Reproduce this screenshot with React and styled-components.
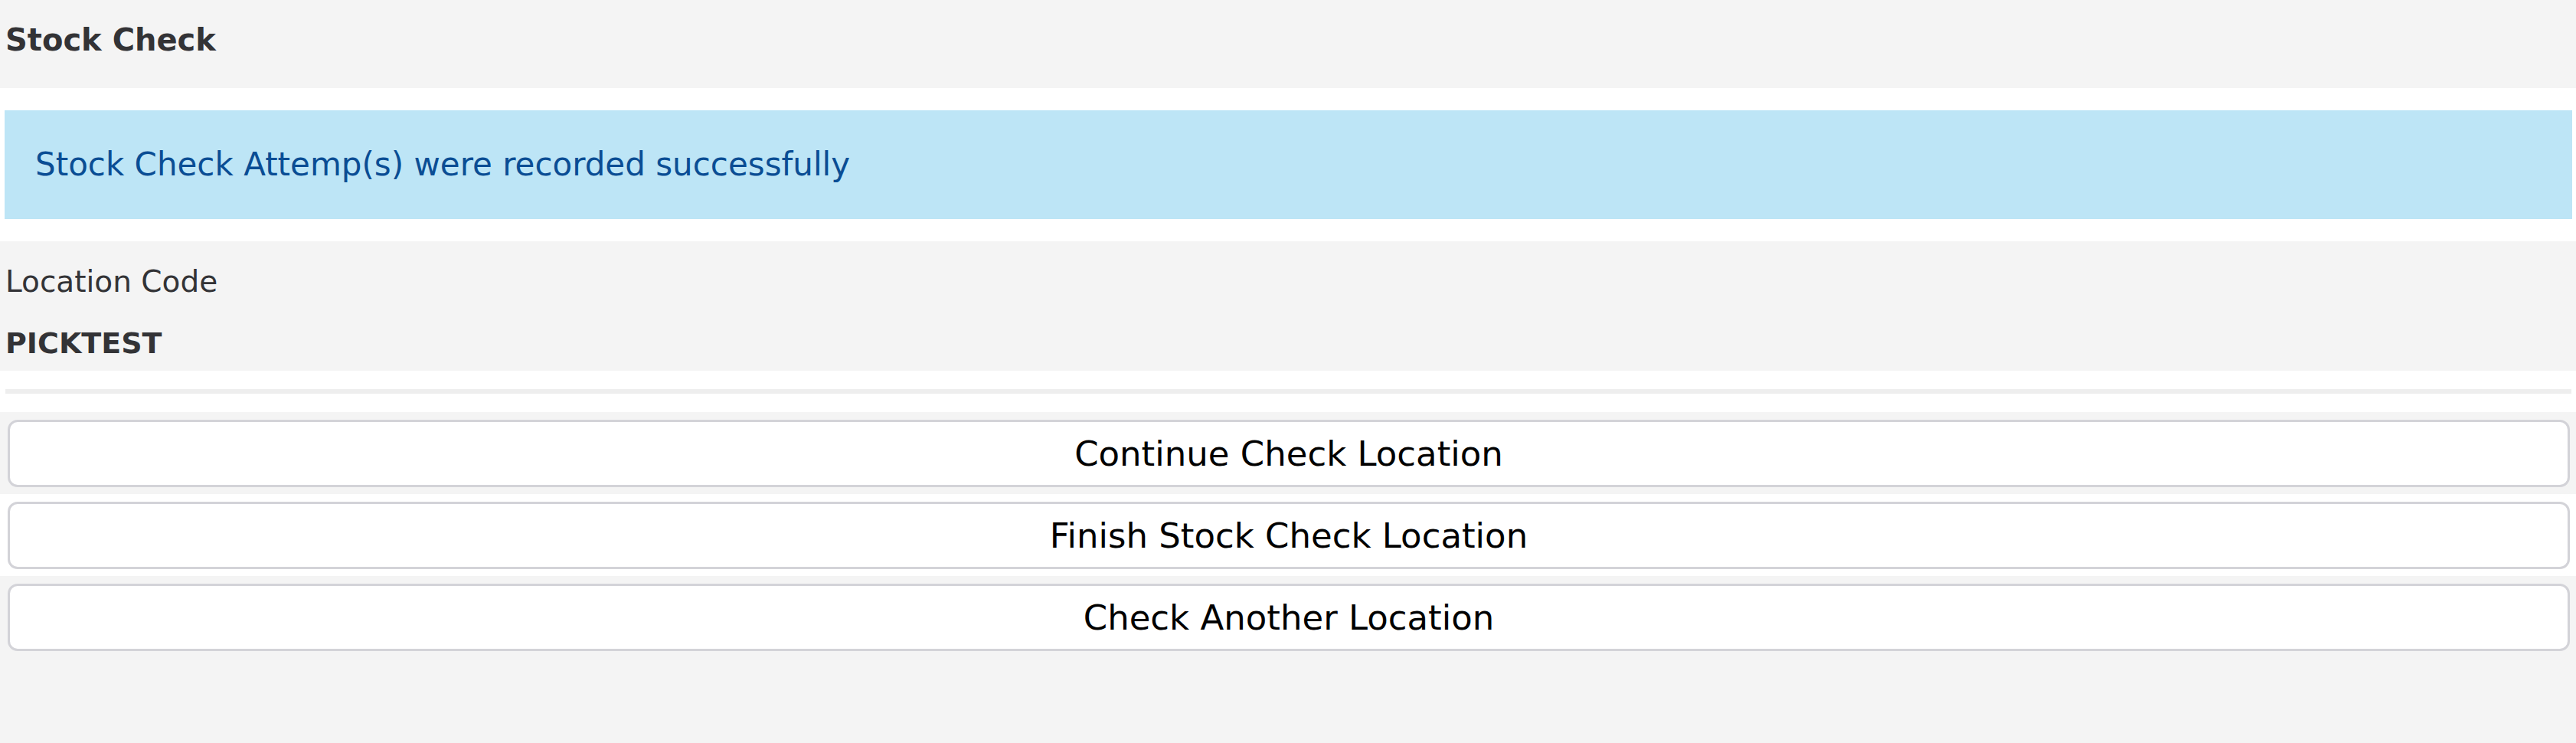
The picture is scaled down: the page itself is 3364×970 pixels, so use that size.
import React from 'react';
import styled, { createGlobalStyle } from 'styled-components';

const GlobalStyle = createGlobalStyle`
  html, body {
    margin: 0;
    padding: 0;
    background-color: #f4f4f4;
    font-family: 'DejaVu Sans', 'Liberation Sans', sans-serif;
  }
`;

const Page = styled.div`
  min-height: 100vh;
  background-color: #f4f4f4;
  color: #333336;
`;

const Row = styled.div`
  background-color: ${({ $striped }) => ($striped ? '#ffffff' : '#f4f4f4')};
  box-sizing: border-box;
`;

const HeaderRow = styled(Row)`
  height: 115px;
  padding: 32px 6px 0 7px;
`;

const Title = styled.h1`
  margin: 0;
  font-size: 40px;
  line-height: 1;
  font-weight: 700;
  color: #333336;
`;

const AlertRow = styled(Row)`
  padding: 29px 5px 29px 6px;
`;

const Alert = styled.div`
  display: flex;
  align-items: center;
  height: 142px;
  box-sizing: border-box;
  padding-left: 40px;
  background-color: #bde5f6;
  color: #0a4d94;
  font-size: 42px;
  line-height: 1;
`;

const LocationRow = styled(Row)`
  display: flex;
  flex-direction: column;
  gap: 42px;
  padding: 33px 6px 17px 7px;
`;

const Label = styled.div`
  font-size: 39px;
  line-height: 1;
  color: #333336;
`;

const Code = styled.div`
  font-size: 38px;
  line-height: 1;
  font-weight: 700;
  color: #333336;
`;

const DividerRow = styled(Row)`
  padding: 24px 6px 24px 7px;
`;

const Divider = styled.div`
  height: 6px;
  background-color: #eeeeee;
`;

const ButtonRow = styled(Row)`
  padding: 10px 8px 9px 10px;
`;

const ActionButton = styled.button`
  display: flex;
  align-items: center;
  justify-content: center;
  width: 100%;
  height: 88px;
  box-sizing: border-box;
  border: 3px solid #d3d3d8;
  border-radius: 13px;
  background-color: #ffffff;
  color: #000000;
  font-family: 'DejaVu Sans', 'Liberation Sans', sans-serif;
  font-size: 45px;
  line-height: 1;
  cursor: pointer;
`;

const actions = [
  'Continue Check Location',
  'Finish Stock Check Location',
  'Check Another Location',
];

export default function App() {
  return (
    <Page>
      <GlobalStyle />
      <HeaderRow>
        <Title>Stock Check</Title>
      </HeaderRow>

      <AlertRow $striped>
        <Alert>Stock Check Attemp(s) were recorded successfully</Alert>
      </AlertRow>

      <LocationRow>
        <Label>Location Code</Label>
        <Code>PICKTEST</Code>
      </LocationRow>

      <DividerRow $striped>
        <Divider />
      </DividerRow>

      {actions.map((label, i) => (
        <ButtonRow key={label} $striped={i % 2 === 1}>
          <ActionButton type="button">{label}</ActionButton>
        </ButtonRow>
      ))}
    </Page>
  );
}
